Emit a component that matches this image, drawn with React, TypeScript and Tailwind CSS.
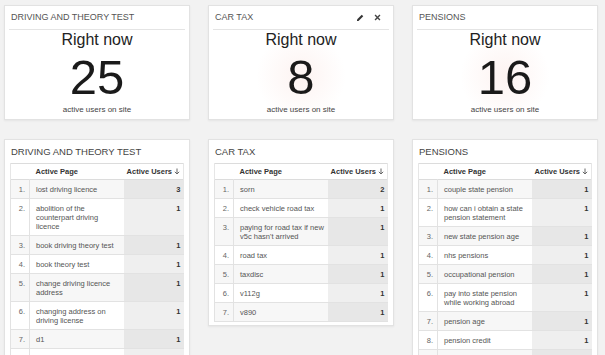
import React from 'react';

type Row = { page: string[]; users: number | null };

const font = { fontFamily: '"Liberation Sans", Arial, sans-serif' };

const widgets = [
  { title: 'DRIVING AND THEORY TEST', count: 25, glow: false, tools: false },
  { title: 'CAR TAX', count: 8, glow: true, tools: true },
  { title: 'PENSIONS', count: 16, glow: true, tools: false },
];

// the last row of the first and third lists starts at the bottom edge, so it is left blank
const tables: { title: string; rows: Row[] }[] = [
  {
    title: 'DRIVING AND THEORY TEST',
    rows: [
      { page: ['lost driving licence'], users: 3 },
      { page: ['abolition of the', 'counterpart driving', 'licence'], users: 1 },
      { page: ['book driving theory test'], users: 1 },
      { page: ['book theory test'], users: 1 },
      { page: ['change driving licence', 'address'], users: 1 },
      { page: ['changing address on', 'driving license'], users: 1 },
      { page: ['d1'], users: 1 },
      { page: ['\u00a0'], users: null },
    ],
  },
  {
    title: 'CAR TAX',
    rows: [
      { page: ['sorn'], users: 2 },
      { page: ['check vehicle road tax'], users: 1 },
      { page: ['paying for road tax if new', "v5c hasn't arrived"], users: 1 },
      { page: ['road tax'], users: 1 },
      { page: ['taxdisc'], users: 1 },
      { page: ['v112g'], users: 1 },
      { page: ['v890'], users: 1 },
    ],
  },
  {
    title: 'PENSIONS',
    rows: [
      { page: ['couple state pension'], users: 1 },
      { page: ['how can i obtain a state', 'pension statement'], users: 1 },
      { page: ['new state pension age'], users: 1 },
      { page: ['nhs pensions'], users: 1 },
      { page: ['occupational pension'], users: 1 },
      { page: ['pay into state pension', 'while working abroad'], users: 1 },
      { page: ['pension age'], users: 1 },
      { page: ['pension credit'], users: 1 },
      { page: ['\u00a0'], users: null },
    ],
  },
];

const Pencil = () => (
  <svg width="8" height="8" viewBox="0 0 16 16">
    <path d="M11.5 1.5l3 3L5 14H2v-3z" fill="#333" />
  </svg>
);

const Close = () => (
  <svg width="7" height="7" viewBox="0 0 10 10">
    <path d="M1.5 1.5l7 7M8.5 1.5l-7 7" stroke="#444" strokeWidth="2" />
  </svg>
);

const SortDown = () => (
  <svg width="6" height="7" viewBox="0 0 6 7" className="inline-block ml-[2px] align-[-1px]">
    <path d="M3 0.5v5.5M0.8 3.8L3 6l2.2-2.2" stroke="#666" strokeWidth="1" fill="none" />
  </svg>
);

const NowCard = ({ title, count, glow, tools }: (typeof widgets)[number]) => (
  <div className="bg-white border border-[#e2e2e2] shadow-[0_1px_2px_rgba(0,0,0,0.06)] px-[4px] pb-[5px] h-[115px] flex flex-col">
    <div className="h-[24px] flex items-center border-b border-[#e4e4e4] pl-[2px] pr-[8px]">
      <span className="text-[9px] text-[#555] leading-none flex-1">{title}</span>
      {tools && (
        <div className="flex items-center gap-[10px]">
          <Pencil />
          <Close />
        </div>
      )}
    </div>
    <div
      className={
        'flex-1 flex flex-col items-center ' +
        (glow ? 'bg-[radial-gradient(circle_at_50%_55%,#fdf3f1_0%,#ffffff_45%)]' : '')
      }
    >
      <div className="mt-[2px] text-[16px] leading-none text-[#222]">Right now</div>
      <div className="mt-[5px] text-[49px] leading-none text-[#1a1a1a]">{count}</div>
      <div className="mt-auto text-[8px] leading-none text-[#444]">active users on site</div>
    </div>
  </div>
);

const TableCard = ({ title, rows }: { title: string; rows: Row[] }) => (
  <div className="bg-white border border-[#e2e2e2] shadow-[0_1px_2px_rgba(0,0,0,0.06)] px-[5px] pb-[3px]">
    <div className="h-[23px] flex items-center pl-[1px] text-[9.5px] text-[#444] leading-none">{title}</div>
    <table className="w-full border-collapse text-[7.5px] leading-[9px]">
      <thead>
        <tr className="border-y border-[#dcdcdc]">
          <th className="w-[19px] border-l border-[#e6e6e6]" />
          <th className="text-left font-bold text-[#333] pl-[6px] py-[3px]">Active Page</th>
          <th className="w-[60px] text-right font-bold text-[#333] pr-[3px] py-[3px] whitespace-nowrap border-r border-[#e6e6e6]">
            Active Users
            <SortDown />
          </th>
        </tr>
      </thead>
      <tbody>
        {rows.map((r, i) => (
          <tr key={i} className={'border-b border-[#e2e2e2] ' + (i % 2 === 0 ? 'bg-[#f7f7f7]' : 'bg-white')}>
            <td className="align-top text-right pr-[4px] pt-[5px] pb-[4px] text-[#666] border-x border-[#e2e2e2]">
              {r.users === null ? '' : `${i + 1}.`}
            </td>
            <td className="align-top pl-[6px] pt-[5px] pb-[4px] text-[#555]">
              {r.page.map((l, j) => (
                <div key={j}>{l}</div>
              ))}
            </td>
            <td
              className={
                'align-top text-right pr-[3px] pt-[5px] pb-[4px] font-bold text-[#333] ' +
                (i % 2 === 0 ? 'bg-[#e7e7e7]' : 'bg-[#efefef]')
              }
            >
              {r.users}
            </td>
          </tr>
        ))}
      </tbody>
    </table>
  </div>
);

export default function App() {
  return (
    <div className="w-[605px] h-[355px] overflow-hidden bg-[#f2f2f2] pt-[5px] pl-[4px]" style={font}>
      <div className="grid grid-cols-[186px_186px_186px] gap-x-[18px]">
        {widgets.map((w) => (
          <NowCard key={w.title} {...w} />
        ))}
      </div>
      <div className="mt-[19px] grid grid-cols-[186px_186px_186px] gap-x-[18px] items-start">
        {tables.map((t) => (
          <TableCard key={t.title} {...t} />
        ))}
      </div>
    </div>
  );
}
